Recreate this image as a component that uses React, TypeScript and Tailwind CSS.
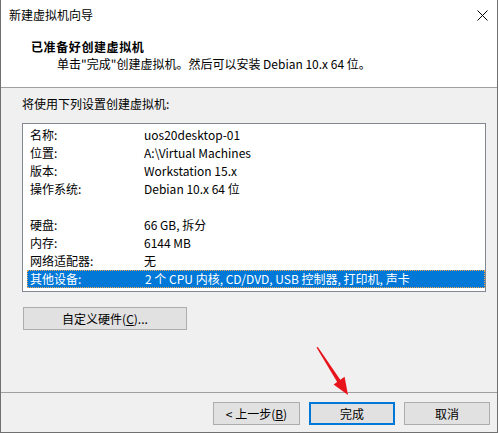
import React from "react";

const FONT = "font-['Segoe_UI','Noto_Sans_CJK_SC',sans-serif]";

interface Row {
  label: string;
  value: string;
}

const ROWS: (Row | null)[] = [
  { label: "名称:", value: "uos20desktop-01" },
  { label: "位置:", value: "A:\\Virtual Machines" },
  { label: "版本:", value: "Workstation 15.x" },
  { label: "操作系统:", value: "Debian 10.x 64 位" },
  null,
  { label: "硬盘:", value: "66 GB, 拆分" },
  { label: "内存:", value: "6144 MB" },
  { label: "网络适配器:", value: "无" },
];

const SELECTED: Row = {
  label: "其他设备:",
  value: "2 个 CPU 内核, CD/DVD, USB 控制器, 打印机, 声卡",
};

function Btn({
  children,
  primary,
  className,
}: {
  children: React.ReactNode;
  primary?: boolean;
  className?: string;
}) {
  return (
    <div
      className={`flex items-center justify-center h-[23px] bg-[#e1e1e1] text-[12px] text-black ${
        primary ? "border-2 border-[#0078d7]" : "border border-[#adadad]"
      } ${className ?? ""}`}
    >
      {children}
    </div>
  );
}

export default function App(): React.JSX.Element {
  return (
    <div className={`relative w-[499px] h-[433px] bg-white ${FONT}`}>
      <div className="w-[498px] h-[433px] flex flex-col bg-[#f0f0f0] border-l border-r border-b border-[#707070]">
        {/* 标题栏 */}
        <div className="h-[30px] bg-white flex items-center justify-between pl-[8px] pr-[8px]">
          <span className="text-[12px] text-black">新建虚拟机向导</span>
          <svg width="11" height="11" viewBox="0 0 11 11" className="mr-[1px]">
            <path d="M0.5 0.5 L10.5 10.5 M10.5 0.5 L0.5 10.5" stroke="#000" strokeWidth="1" />
          </svg>
        </div>

        {/* 头部 */}
        <div className="h-[58px] bg-white border-b border-[#a0a0a0] flex flex-col pt-[8px]">
          <div className="pl-[30px] text-[12px] font-bold leading-[18px] tracking-[0.6px] text-black">
            已准备好创建虚拟机
          </div>
          <div className="pl-[56px] text-[12px] leading-[15px] text-black">
            单击"完成"创建虚拟机。然后可以安装 Debian 10.x 64 位。
          </div>
        </div>

        {/* 主体 */}
        <div className="flex-1 flex flex-col px-[21px]">
          <div className="pt-[8px] h-[35px] text-[12px] leading-[16px] text-black">
            将使用下列设置创建虚拟机:
          </div>
          <div className="w-[464px] h-[169px] bg-white border border-[#828790] pt-[2px] pl-[4px]">
            {ROWS.map((r, i) => (
              <div key={i} className="h-[18px] flex items-center text-[12px] text-black">
                {r && (
                  <>
                    <span className="w-[117px] pl-[3px]">{r.label}</span>
                    <span>{r.value}</span>
                  </>
                )}
              </div>
            ))}
            <div className="h-[18px] flex items-center text-[12px] text-white bg-[#0078d7] border border-dotted border-[#f4a64c]">
              <span className="w-[117px] pl-[2px]">{SELECTED.label}</span>
              <span>{SELECTED.value}</span>
            </div>
          </div>
          <div className="pt-[15px]">
            <Btn className="w-[164px] ml-[1px]">自定义硬件(<u>C</u>)...</Btn>
          </div>
        </div>

        {/* 底部按钮 */}
        <div className="h-[40px] border-t border-[#a0a0a0] flex justify-end gap-[9px] pt-[9px] pr-[7px]">
          <Btn className="w-[87px]">&lt; 上一步(<u>B</u>)</Btn>
          <Btn primary className="w-[86px]">完成</Btn>
          <Btn className="w-[86px]">取消</Btn>
        </div>
      </div>

      {/* 红色箭头标注 */}
      <svg className="absolute left-0 top-0 pointer-events-none" width="499" height="433">
        <polygon points="316.5,347.5 317.8,346.9 340.8,380.5 337.6,382.7" fill="#e8141c" />
        <polygon points="348,395 333.6,384.6 344.6,376.8" fill="#e8141c" />
      </svg>
    </div>
  );
}
